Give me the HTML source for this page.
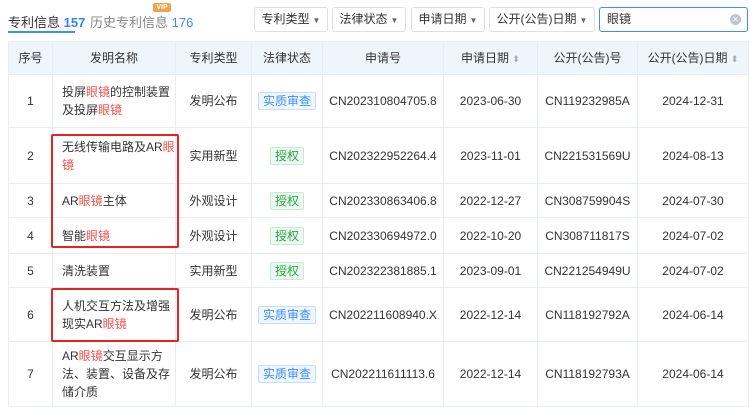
<!DOCTYPE html>
<html><head><meta charset="utf-8"><style>
*{margin:0;padding:0;box-sizing:border-box}
body{width:750px;height:406px;overflow:hidden;background:#fff;font-family:"Liberation Sans","Noto Sans CJK SC",sans-serif;font-size:12px;color:#333;position:relative}
.a{position:absolute}
.tab{top:12px;font-size:13px}
.btn{position:absolute;top:7px;height:25px;border:1px solid #dcdfe6;border-radius:3px;font-size:12px;line-height:23px;text-align:center;color:#333}
.btn i{font-style:normal;font-size:8px;color:#666;margin-left:3px}
table{position:absolute;left:8px;top:41px;border-collapse:collapse;table-layout:fixed;width:740px}
td,th{border:1px solid #e8edf3;text-align:center;vertical-align:middle;font-weight:normal;line-height:18px;white-space:nowrap;overflow:hidden}
th{background:#eef5fb;height:33px;color:#333}
td.n{text-align:left;padding:0 0 0 9px}
.r{color:#f2524f}
.tag{display:inline-block;height:18px;line-height:16px;padding:0 4px;border-radius:2px;font-size:12px}
.b{color:#3e8ef7;background:#eef6ff;border:1px solid #c7dffc}
.g{color:#2aa84a;background:#edf9f0;border:1px solid #c4ecd0}
.s{font-size:9px;color:#aaa}
.box{position:absolute;border:2px solid #e52323;border-radius:2px}
</style></head><body>
<div class="a tab" style="left:8px;color:#333">专利信息 <b style="color:#2f86f6">157</b></div>
<div class="a" style="left:8px;top:31px;width:67px;height:2px;background:#3e8ef7"></div>
<div class="a tab" style="left:90px;color:#888">历史专利信息 <span style="color:#3e8ef7">176</span></div>
<div class="a" style="left:153px;top:3px;width:18px;height:9px;background:#f0a34a;color:#fff;font-size:7px;line-height:9px;text-align:center;border-radius:2px;font-weight:bold">VIP</div>
<div class="btn" style="left:254px;width:74px">专利类型<i>▼</i></div>
<div class="btn" style="left:332px;width:74px">法律状态<i>▼</i></div>
<div class="btn" style="left:411px;width:74px">申请日期<i>▼</i></div>
<div class="btn" style="left:489px;width:106px">公开(公告)日期<i>▼</i></div>
<div class="btn" style="left:599px;width:149px;border-color:#3e8ef7;text-align:left;padding-left:7px">眼镜<span style="position:absolute;right:6px;top:6px;width:11px;height:11px;border-radius:50%;background:#c0c4cc;color:#fff;font-size:8px;line-height:11px;text-align:center">✕</span></div>
<table>
<colgroup><col style="width:44px"><col style="width:123px"><col style="width:76px"><col style="width:71px"><col style="width:121px"><col style="width:94px"><col style="width:100px"><col style="width:111px"></colgroup>
<tr><th>序号</th><th>发明名称</th><th>专利类型</th><th>法律状态</th><th>申请号</th><th>申请日期 <span class="s">⬍</span></th><th>公开(公告)号</th><th>公开(公告)日期 <span class="s">⬍</span></th></tr>
<tr style="height:53px"><td>1</td><td class="n">投屏<span class="r">眼镜</span>的控制装置<br>及投屏<span class="r">眼镜</span></td><td>发明公布</td><td><span class="tag b">实质审查</span></td><td>CN202310804705.8</td><td>2023-06-30</td><td>CN119232985A</td><td>2024-12-31</td></tr>
<tr style="height:56px"><td>2</td><td class="n">无线传输电路及AR<span class="r">眼</span><br><span class="r">镜</span></td><td>实用新型</td><td><span class="tag g">授权</span></td><td>CN202322952264.4</td><td>2023-11-01</td><td>CN221531569U</td><td>2024-08-13</td></tr>
<tr style="height:34px"><td>3</td><td class="n">AR<span class="r">眼镜</span>主体</td><td>外观设计</td><td><span class="tag g">授权</span></td><td>CN202330863406.8</td><td>2022-12-27</td><td>CN308759904S</td><td>2024-07-30</td></tr>
<tr style="height:36px"><td>4</td><td class="n">智能<span class="r">眼镜</span></td><td>外观设计</td><td><span class="tag g">授权</span></td><td>CN202330694972.0</td><td>2022-10-20</td><td>CN308711817S</td><td>2024-07-02</td></tr>
<tr style="height:34px"><td>5</td><td class="n">清洗装置</td><td>实用新型</td><td><span class="tag g">授权</span></td><td>CN202322381885.1</td><td>2023-09-01</td><td>CN221254949U</td><td>2024-07-02</td></tr>
<tr style="height:54px"><td>6</td><td class="n">人机交互方法及增强<br>现实AR<span class="r">眼镜</span></td><td>发明公布</td><td><span class="tag b">实质审查</span></td><td>CN202211608940.X</td><td>2022-12-14</td><td>CN118192792A</td><td>2024-06-14</td></tr>
<tr style="height:65px"><td>7</td><td class="n">AR<span class="r">眼镜</span>交互显示方<br>法、装置、设备及存<br>储介质</td><td>发明公布</td><td><span class="tag b">实质审查</span></td><td>CN202211611113.6</td><td>2022-12-14</td><td>CN118192793A</td><td>2024-06-14</td></tr>
</table>
<div class="box" style="left:51px;top:134px;width:128px;height:114px"></div>
<div class="box" style="left:51px;top:288px;width:128px;height:54px"></div>
</body></html>
